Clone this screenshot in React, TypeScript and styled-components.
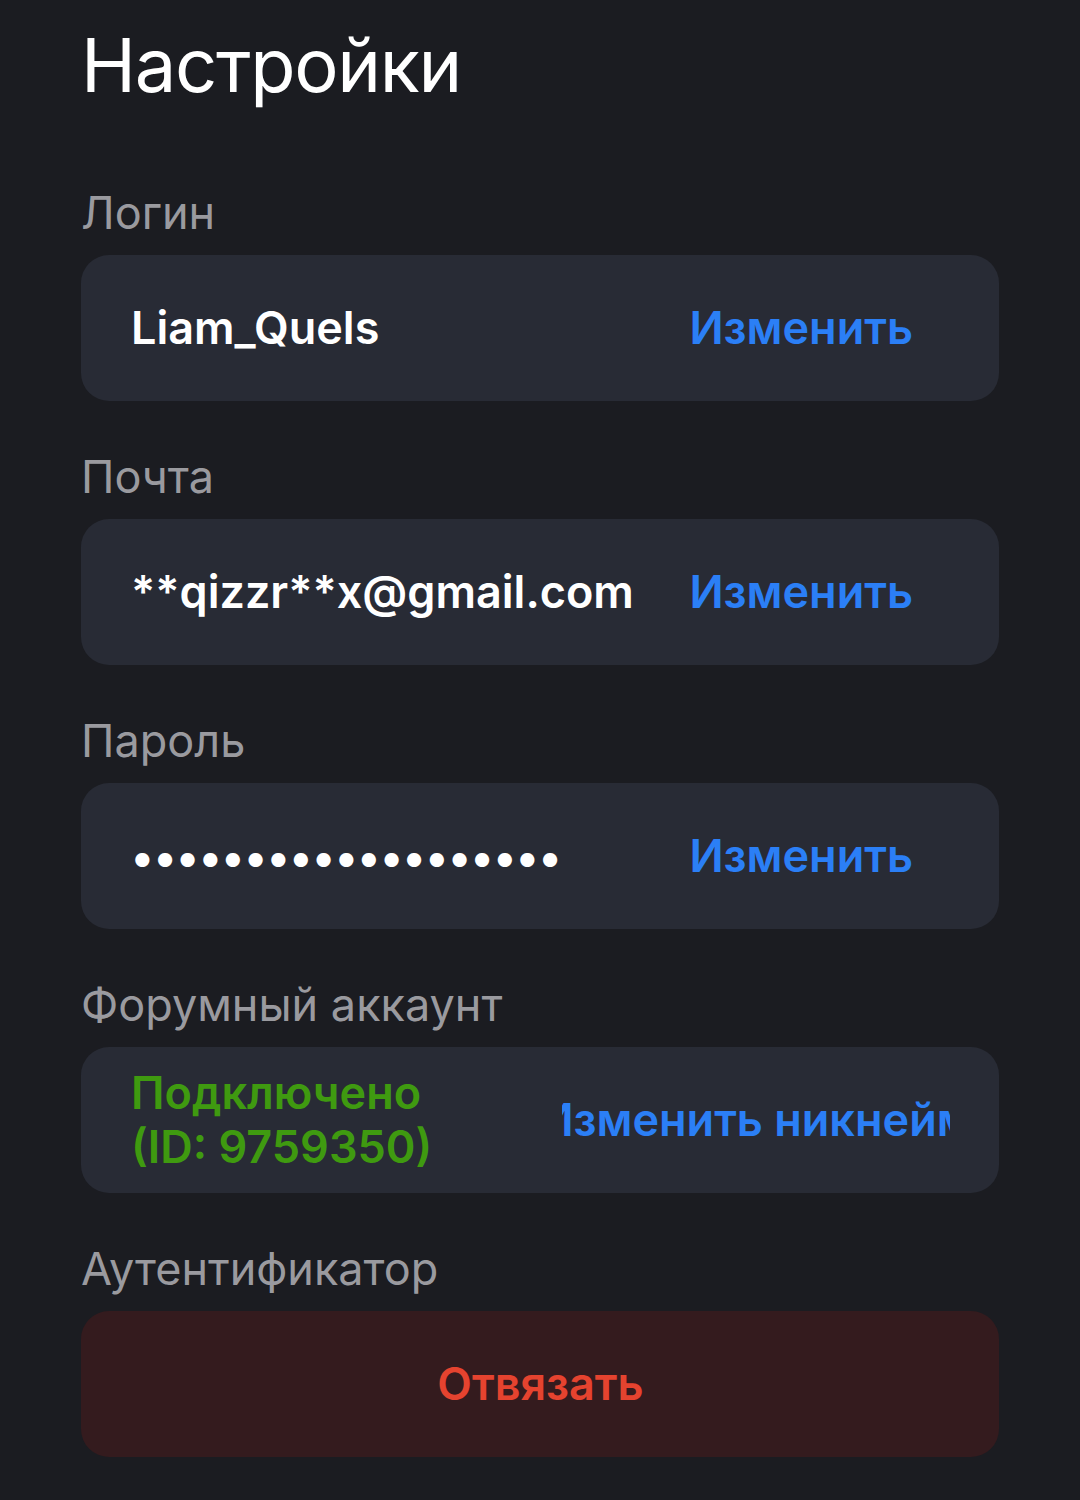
import React from "react";
import styled, { createGlobalStyle } from "styled-components";

const Global = createGlobalStyle`
  html, body { margin: 0; padding: 0; background: #1b1c21; }
  body { font-family: Inter, "Noto Sans", "Liberation Sans", sans-serif; }
`;

const Page = styled.div`
  min-height: 1500px;
  box-sizing: border-box;
  padding: 19px 81px 40px 81px;
  background: #1b1c21;
  display: flex;
  flex-direction: column;
`;

const Title = styled.h1`
  margin: 0 0 72px 0;
  font-size: 74px;
  line-height: 92px;
  font-weight: 400;
  color: #ffffff;
  letter-spacing: -1.3px;
`;

const Section = styled.section`
  display: flex;
  flex-direction: column;
  & + & { margin-top: 46px; }
`;

const Label = styled.div`
  font-size: 45px;
  line-height: 60px;
  font-weight: 400;
  color: #9a9a9f;
  margin-bottom: 12px;
`;

const Card = styled.div<{ $danger?: boolean }>`
  height: 146px;
  box-sizing: border-box;
  border-radius: 28px;
  background: ${(p) => (p.$danger ? "#341b1e" : "#282b35")};
  display: flex;
  align-items: center;
  justify-content: ${(p) => (p.$danger ? "center" : "space-between")};
  padding: 0 49px 0 50px;
`;

const Value = styled.div<{ $tone?: "green" }>`
  flex: 1;
  min-width: 0;
  font-size: 45px;
  line-height: 54px;
  font-weight: 600;
  color: ${(p) => (p.$tone === "green" ? "#3f9a10" : "#ffffff")};
  white-space: nowrap;
  display: flex;
  flex-direction: column;
`;

const Dots = styled.div`
  flex: 1;
  font-size: 45px;
  font-weight: 600;
  color: #ffffff;
  white-space: nowrap;
`;

const ActionButton = styled.button`
  flex-shrink: 0;
  max-width: 388px;
  padding: 0 37px;
  overflow: hidden;
  display: flex;
  justify-content: center;
  background: none;
  border: none;
  font-family: inherit;
  font-size: 45px;
  line-height: 54px;
  font-weight: 600;
  color: #2b7ff6;
  white-space: nowrap;
  cursor: pointer;
`;

const DangerText = styled.span`
  font-size: 45px;
  line-height: 54px;
  font-weight: 600;
  color: #e5432f;
`;

export default function App() {
  return (
    <>
      <Global />
      <Page>
        <Title>Настройки</Title>
        <Section>
          <Label>Логин</Label>
          <Card>
            <Value>Liam_Quels</Value>
            <ActionButton>Изменить</ActionButton>
          </Card>
        </Section>
        <Section>
          <Label>Почта</Label>
          <Card>
            <Value>**qizzr**x@gmail.com</Value>
            <ActionButton>Изменить</ActionButton>
          </Card>
        </Section>
        <Section>
          <Label>Пароль</Label>
          <Card>
            <Dots>{"•".repeat(19)}</Dots>
            <ActionButton>Изменить</ActionButton>
          </Card>
        </Section>
        <Section>
          <Label>Форумный аккаунт</Label>
          <Card>
            <Value $tone="green">
              <span>Подключено</span>
              <span>(ID: 9759350)</span>
            </Value>
            <ActionButton>
              <span>Изменить никнейм</span>
            </ActionButton>
          </Card>
        </Section>
        <Section>
          <Label>Аутентификатор</Label>
          <Card $danger>
            <DangerText>Отвязать</DangerText>
          </Card>
        </Section>
      </Page>
    </>
  );
}
